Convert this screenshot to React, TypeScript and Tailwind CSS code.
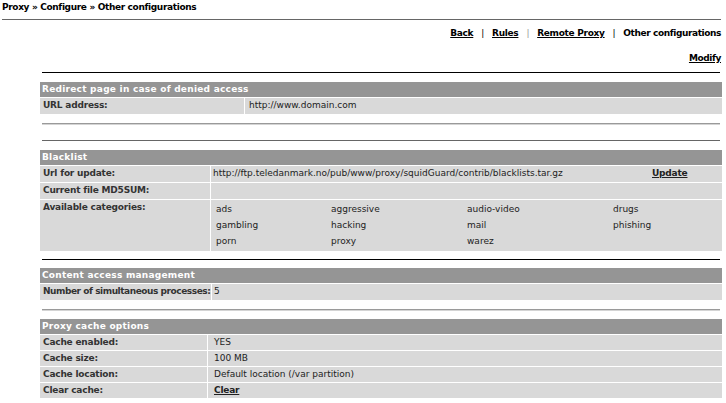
type Row = { label: string; value?: React.ReactNode; tight?: boolean };

function SectionHeader({ title }: { title: string }) {
  return (
    <div className="bg-[#959595] h-[15px] flex items-center pl-[2px] text-white font-bold tracking-[0.25px]">
      {title}
    </div>
  );
}

function Section({
  title,
  labelWidth,
  valuePad,
  rowHeight = "min-h-[16px]",
  rows,
}: {
  title: string;
  labelWidth: string;
  valuePad: string;
  rowHeight?: string;
  rows: Row[];
}) {
  return (
    <div className="flex flex-col gap-px">
      <SectionHeader title={title} />
      {rows.map((r) => (
        <div key={r.label} className={`grid gap-px ${labelWidth}`}>
          <div
            className={`bg-[#d9d9d9] ${rowHeight} pt-[2px] pl-[3px] font-bold text-[#333] whitespace-nowrap overflow-hidden ${
              r.tight ? "tracking-[-0.45px]" : "tracking-[-0.2px]"
            }`}
          >
            {r.label}
          </div>
          <div className={`bg-[#d9d9d9] ${rowHeight} flex items-start pt-[2px] text-[#222] ${valuePad}`}>
            {r.value}
          </div>
        </div>
      ))}
    </div>
  );
}

const categories = [
  "ads", "aggressive", "audio-video", "drugs",
  "gambling", "hacking", "mail", "phishing",
  "porn", "proxy", "warez",
];

export default function App() {
  return (
    <div className="w-[726px] h-[403px] bg-white text-[9px] leading-[11px] text-black font-['DejaVu_Sans',Verdana,sans-serif] overflow-hidden">
      <div className="pl-[2px] pt-[2px] h-[19px] font-bold tracking-[-0.35px]">
        Proxy » Configure » Other configurations
      </div>
      <div className="ml-[2px] mr-[5px] border-t border-[#666]" />

      <nav className="flex justify-end items-center gap-[8px] pr-[5px] mt-[8px] h-[11px] font-bold tracking-[-0.3px]">
        <a className="underline">Back</a>
        <span className="font-normal">|</span>
        <a className="underline">Rules</a>
        <span className="font-normal text-[#999]">|</span>
        <a className="underline">Remote Proxy</a>
        <span className="font-normal">|</span>
        <span className="tracking-[-0.4px]">Other configurations</span>
      </nav>
      <div className="flex justify-end pr-[5px] mt-[14px] h-[11px] font-bold tracking-[-0.4px]">
        <a className="underline">Modify</a>
      </div>

      <div className="ml-[40px] mr-[4px]">
        <div className="mx-[2px] mt-[8px] border-t border-black" />
        <div className="mt-[9px]">
          <Section
            title="Redirect page in case of denied access"
            labelWidth="grid-cols-[204px_1fr]"
            valuePad="pl-[4px]"
            rows={[{ label: "URL address:", value: "http://www.domain.com" }]}
          />
        </div>
        <div className="mx-[2px] mt-[9px] border-t border-b border-t-[#9a9a9a] border-b-[#d4d4d4]" />
        <div className="mx-[2px] mt-[15px] border-t border-[#666]" />

        <div className="mt-[9px]">
          <Section
            title="Blacklist"
            labelWidth="grid-cols-[170px_1fr]"
            valuePad="pl-[2px]"
            rows={[
              {
                label: "Url for update:",
                value: (
                  <div className="grid grid-cols-[439px_1fr] w-full">
                    <span>http://ftp.teledanmark.no/pub/www/proxy/squidGuard/contrib/blacklists.tar.gz</span>
                    <a className="underline font-bold tracking-[-0.2px]">Update</a>
                  </div>
                ),
              },
              { label: "Current file MD5SUM:", value: "" },
              {
                label: "Available categories:",
                value: (
                  <div className="grid grid-cols-[115px_136px_146px_1fr] gap-y-[5px] pl-[3px] pt-[2px] pb-[4px] w-full">
                    {categories.map((c) => (
                      <span key={c}>{c}</span>
                    ))}
                  </div>
                ),
              },
            ]}
          />
        </div>
        <div className="mx-[2px] mt-[8px] border-t border-black" />

        <div className="mt-[8px]">
          <Section
            title="Content access management"
            labelWidth="grid-cols-[171px_1fr]"
            valuePad="pl-[2px]"
            rows={[{ label: "Number of simultaneous processes:", value: "5", tight: true }]}
          />
        </div>
        <div className="mx-[2px] mt-[9px] border-t border-b border-t-[#9a9a9a] border-b-[#d4d4d4]" />

        <div className="mt-[8px]">
          <Section
            title="Proxy cache options"
            labelWidth="grid-cols-[167px_1fr]"
            valuePad="pl-[6px]"
            rowHeight="min-h-[15px]"
            rows={[
              { label: "Cache enabled:", value: "YES" },
              { label: "Cache size:", value: "100 MB" },
              { label: "Cache location:", value: "Default location (/var partition)" },
              { label: "Clear cache:", value: <a className="underline font-bold tracking-[-0.2px]">Clear</a> },
            ]}
          />
        </div>
      </div>
    </div>
  );
}
